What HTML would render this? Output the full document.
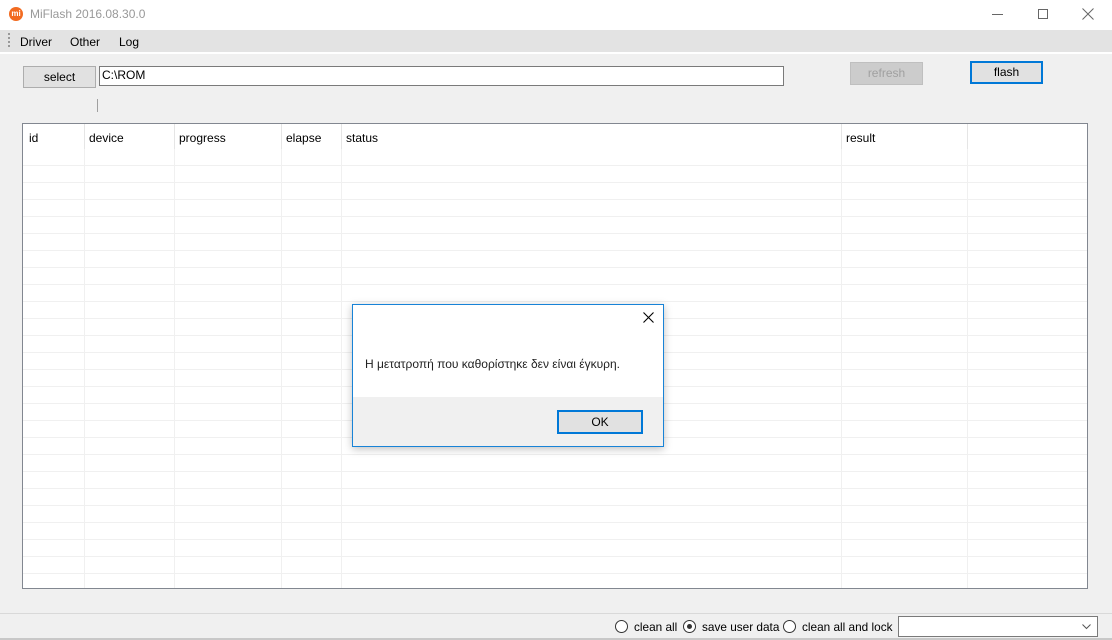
<!DOCTYPE html>
<html><head><meta charset="utf-8"><style>
*{margin:0;padding:0;box-sizing:border-box}
body{width:1112px;height:640px;background:#f0f0f0;font-family:"Liberation Sans",sans-serif;font-size:12px;color:#000;position:relative;overflow:hidden}
.a{position:absolute}
.btn{position:absolute;background:#e1e1e1;border:1px solid #adadad;text-align:center;font-size:12px}
</style></head><body>
<div class="a" style="left:0;top:0;width:1112px;height:30px;background:#fff"></div>
<div class="a" style="left:9px;top:7px;width:14px;height:14px;border-radius:50%;background:#f26b21;color:#fff;font-size:8px;line-height:14px;text-align:center;font-weight:bold">mi</div>
<div class="a" style="left:30px;top:7px;font-size:12px;color:#999">MiFlash 2016.08.30.0</div>
<div class="a" style="left:992px;top:14px;width:11px;height:1px;background:#666"></div>
<div class="a" style="left:1038px;top:9px;width:10px;height:10px;border:1px solid #666"></div>
<svg class="a" style="left:1082px;top:8px" width="12" height="12"><path d="M0.5 0.5L11.5 11.5M11.5 0.5L0.5 11.5" stroke="#666" stroke-width="1"/></svg>
<div class="a" style="left:0;top:30px;width:1112px;height:22px;background:#e3e3e3"></div>
<div class="a" style="left:8px;top:33px;width:2px;height:14px;border-left:2px dotted #999"></div>
<div class="a" style="left:20px;top:35px">Driver</div>
<div class="a" style="left:70px;top:35px">Other</div>
<div class="a" style="left:119px;top:35px">Log</div>
<div class="a" style="left:0;top:52px;width:1112px;height:2px;background:#fff"></div>
<div class="btn" style="left:23px;top:66px;width:73px;height:22px;line-height:20px">select</div>
<div class="a" style="left:99px;top:66px;width:685px;height:20px;background:#fff;border:1px solid #7a7a7a;padding-left:2px;line-height:17px">C:\ROM</div>
<div class="btn" style="left:850px;top:62px;width:73px;height:23px;line-height:21px;background:#cccccc;border-color:#bfbfbf;color:#a0a0a0">refresh</div>
<div class="btn" style="left:970px;top:61px;width:73px;height:23px;line-height:19px;border:2px solid #0078d7">flash</div>
<div class="a" style="left:97px;top:99px;width:1px;height:13px;background:#a0a0a0"></div>
<div class="a" style="left:22px;top:123px;width:1066px;height:466px;background:#fff;border:1px solid #828790;overflow:hidden">
 <div class="a" style="left:0;top:41px;width:1064px;height:430px;background:repeating-linear-gradient(to bottom,#f0f0f0 0,#f0f0f0 1px,transparent 1px,transparent 17px)"></div>
 <div class="a" style="left:61px;top:0;width:1px;height:470px;background:#f0f0f0"></div>
 <div class="a" style="left:151px;top:0;width:1px;height:470px;background:#f0f0f0"></div>
 <div class="a" style="left:258px;top:0;width:1px;height:470px;background:#f0f0f0"></div>
 <div class="a" style="left:318px;top:0;width:1px;height:470px;background:#f0f0f0"></div>
 <div class="a" style="left:818px;top:0;width:1px;height:470px;background:#f0f0f0"></div>
 <div class="a" style="left:944px;top:0;width:1px;height:470px;background:#f0f0f0"></div>
 <div class="a" style="left:0;top:0;width:1064px;height:25px;background:#fff"></div>
 <div class="a" style="left:61px;top:0;width:1px;height:25px;background:#e5e5e5"></div>
 <div class="a" style="left:151px;top:0;width:1px;height:25px;background:#e5e5e5"></div>
 <div class="a" style="left:258px;top:0;width:1px;height:25px;background:#e5e5e5"></div>
 <div class="a" style="left:318px;top:0;width:1px;height:25px;background:#e5e5e5"></div>
 <div class="a" style="left:818px;top:0;width:1px;height:25px;background:#e5e5e5"></div>
 <div class="a" style="left:944px;top:0;width:1px;height:25px;background:#e5e5e5"></div>
 <div class="a" style="left:6px;top:7px">id</div>
 <div class="a" style="left:66px;top:7px">device</div>
 <div class="a" style="left:156px;top:7px">progress</div>
 <div class="a" style="left:263px;top:7px">elapse</div>
 <div class="a" style="left:323px;top:7px">status</div>
 <div class="a" style="left:823px;top:7px">result</div>
</div>
<div class="a" style="left:0;top:613px;width:1112px;height:1px;background:#d9d9d9"></div>
<div class="a" style="left:0;top:638px;width:1112px;height:2px;background:#c8c8c8"></div>
<div class="a" style="left:615px;top:620px;width:13px;height:13px;border:1px solid #333;border-radius:50%;background:#fff"></div>
<div class="a" style="left:634px;top:620px;font-size:11.8px">clean all</div>
<div class="a" style="left:683px;top:620px;width:13px;height:13px;border:1px solid #333;border-radius:50%;background:#fff"><div class="a" style="left:3px;top:3px;width:5px;height:5px;border-radius:50%;background:#333"></div></div>
<div class="a" style="left:702px;top:620px;font-size:11.8px">save user data</div>
<div class="a" style="left:783px;top:620px;width:13px;height:13px;border:1px solid #333;border-radius:50%;background:#fff"></div>
<div class="a" style="left:802px;top:620px;font-size:11.8px">clean all and lock</div>
<div class="a" style="left:898px;top:616px;width:200px;height:21px;background:#fff;border:1px solid #7a7a7a"><svg class="a" style="right:6px;top:7px" width="9" height="6"><path d="M0.5 0.5L4.5 4.5L8.5 0.5" stroke="#555" fill="none"/></svg></div>
<div class="a" style="left:352px;top:304px;width:312px;height:143px;background:#fff;border:1px solid #1883d7;box-shadow:0 2px 8px rgba(0,0,0,.25)">
 <svg class="a" style="left:290px;top:7px" width="11" height="11"><path d="M0.5 0.5L10.5 10.5M10.5 0.5L0.5 10.5" stroke="#000" stroke-width="1.1"/></svg>
 <div class="a" style="left:12px;top:52px;color:#222">Η μετατροπή που καθορίστηκε δεν είναι έγκυρη.</div>
 <div class="a" style="left:0;top:92px;width:310px;height:49px;background:#f0f0f0"></div>
 <div class="btn" style="left:204px;top:105px;width:86px;height:24px;line-height:20px;border:2px solid #0078d7">OK</div>
</div>
</body></html>
